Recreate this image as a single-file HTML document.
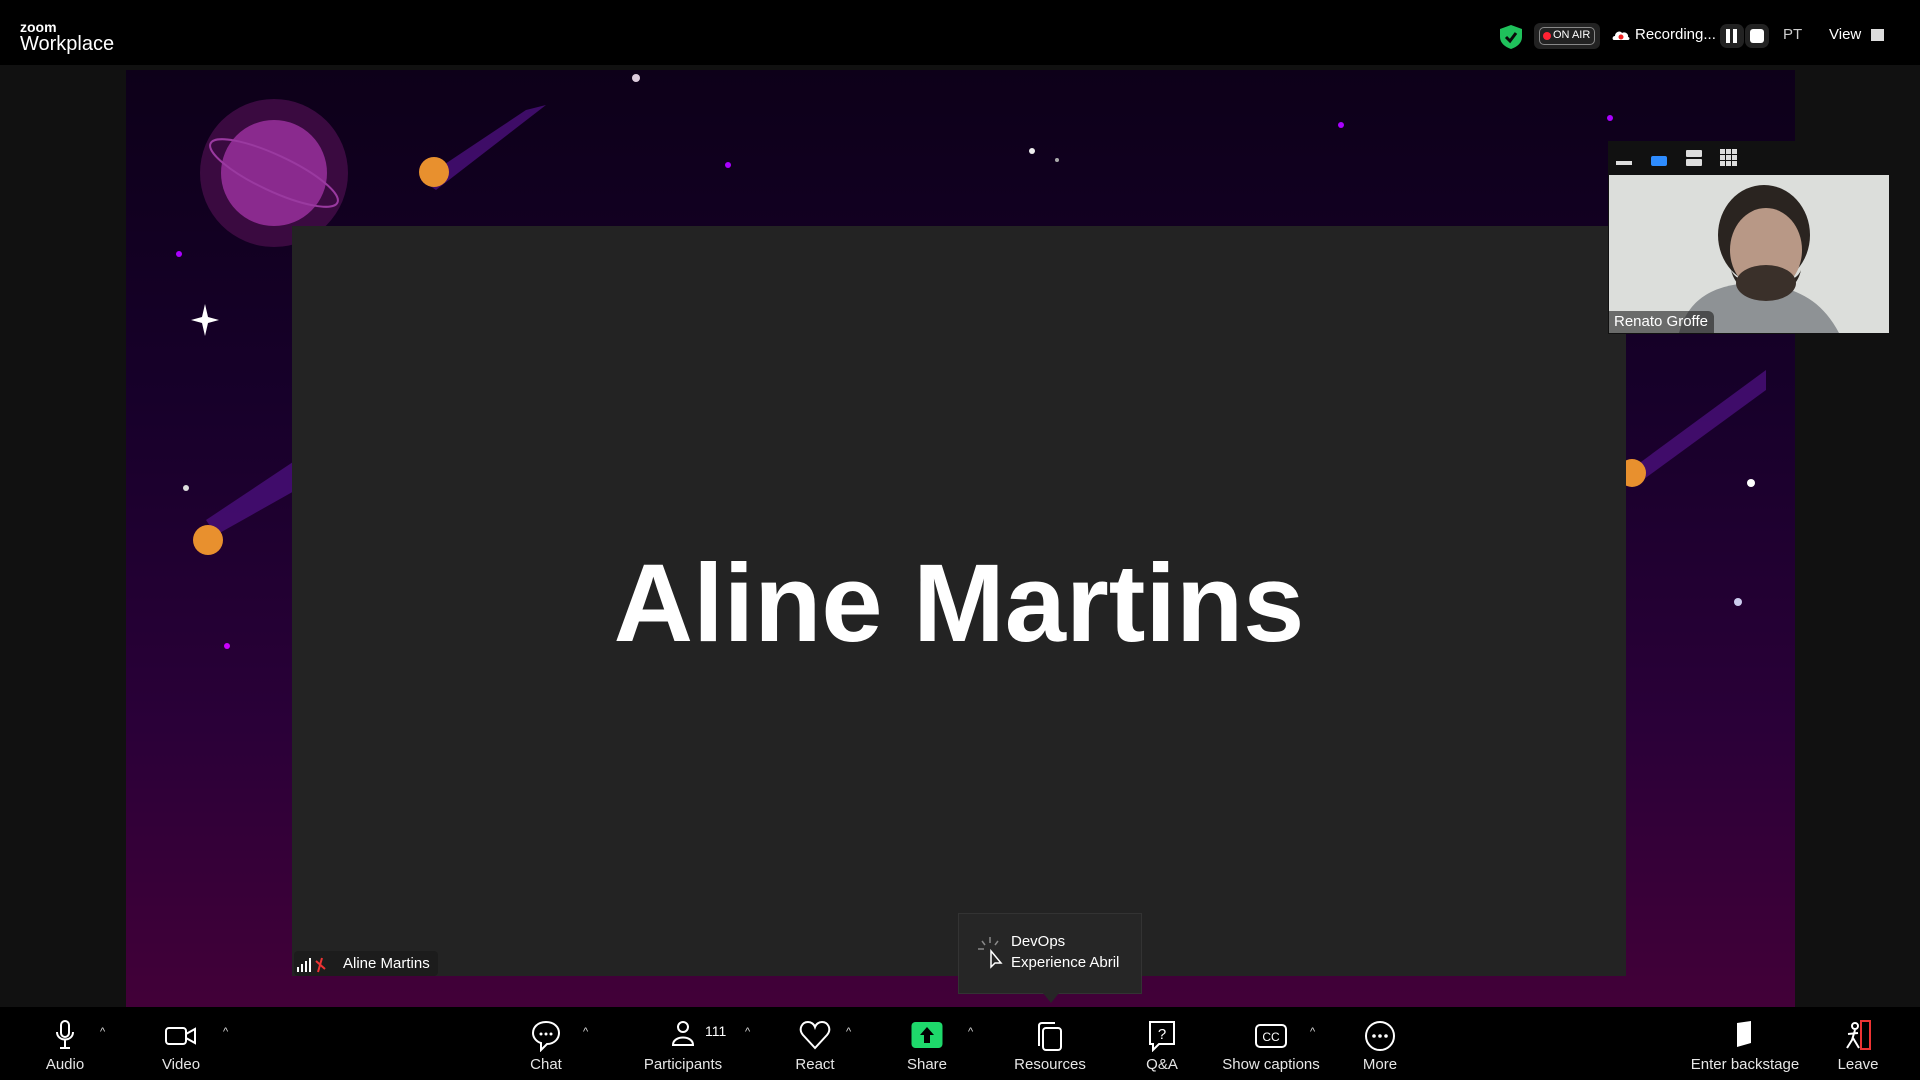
<!DOCTYPE html>
<html><head><meta charset="utf-8"><style>
*{margin:0;padding:0;box-sizing:border-box}
body{width:1920px;height:1080px;background:#111;overflow:hidden;position:relative;font-family:"Liberation Sans",sans-serif;color:#fff}
.abs{position:absolute}
#top{left:0;top:0;width:1920px;height:65px;background:#000}
#stage{left:126px;top:70px;width:1669px;height:937px;background:linear-gradient(180deg,#0d0019 0%,#17002a 35%,#2a0038 70%,#420038 100%)}
#slide{left:292px;top:226px;width:1334px;height:750px;background:#232323}
#name{left:292px;top:540px;width:1334px;text-align:center;font-size:110px;font-weight:bold;letter-spacing:0}
#bar{left:0;top:1007px;width:1920px;height:73px;background:#000}
.it{position:absolute;top:1056px;font-size:15px;color:#e6e6e6;transform:translateX(-50%);white-space:nowrap}
.ic{position:absolute;top:1020px;transform:translateX(-50%)}
.car{position:absolute;top:1026px;font-size:11px;color:#ddd}
</style></head><body>
<div id="top" class="abs"></div>
<div class="abs" style="left:20px;top:19px;font-size:14px;font-weight:bold;letter-spacing:0">zoom</div>
<div class="abs" style="left:20px;top:33px;font-size:20px">Workplace</div>

<svg class="abs" style="left:1498px;top:24px" width="26" height="26" viewBox="0 0 26 26"><path d="M13 1 L24 5 V13 C24 19 19 23 13 25 C7 23 2 19 2 13 V5 Z" fill="#1fc15b"/><path d="M8 13 L12 17 L18 9" stroke="#0a0a0a" stroke-width="3" fill="none"/></svg>
<div class="abs" style="left:1534px;top:23px;width:66px;height:26px;background:#222;border-radius:6px"></div>
<div class="abs" style="left:1539px;top:27px;width:56px;height:18px;border:1.5px solid #888;border-radius:5px;font-size:11px;line-height:15px;padding-left:13px;white-space:nowrap">ON AIR</div>
<div class="abs" style="left:1543px;top:32px;width:8px;height:8px;border-radius:50%;background:#f23"></div>
<svg class="abs" style="left:1612px;top:28px" width="18" height="14"><path d="M2 12 C0 12 0 8 3 8 C3 4 8 2 10 5 C13 3 17 6 16 9 C18 9 18 12 16 12 Z" fill="#fff"/><circle cx="9" cy="9" r="2.5" fill="#e22"/></svg>
<div class="abs" style="left:1635px;top:26px;font-size:15px;white-space:nowrap">Recording...</div>
<div class="abs" style="left:1720px;top:24px;width:24px;height:24px;background:#222;border-radius:7px"></div>
<div class="abs" style="left:1726px;top:29px;width:4px;height:14px;background:#fff"></div>
<div class="abs" style="left:1733px;top:29px;width:4px;height:14px;background:#fff"></div>
<div class="abs" style="left:1745px;top:24px;width:24px;height:24px;background:#222;border-radius:7px"></div>
<div class="abs" style="left:1750px;top:29px;width:14px;height:14px;background:#fff;border-radius:3px"></div>
<div class="abs" style="left:1783px;top:26px;font-size:15px;color:#ccc">PT</div>
<div class="abs" style="left:1829px;top:26px;font-size:15px">View</div>
<div class="abs" style="left:1871px;top:29px;width:13px;height:12px;background:#ddd"></div>

<div id="stage" class="abs"></div>
<svg class="abs" style="left:126px;top:70px" width="1669" height="937">
<circle cx="148" cy="103" r="74" fill="#3a0a40"/>
<circle cx="148" cy="103" r="53" fill="#8a2a8e"/>
<ellipse cx="148" cy="103" rx="70" ry="18" transform="rotate(25 148 103)" fill="none" stroke="#9a3aa0" stroke-width="2"/>
<path d="M295 110 L400 40 L420 35 L310 120 Z" fill="#4a0f7a" opacity=".8"/>
<circle cx="308" cy="102" r="15" fill="#e8902e"/>
<path d="M80 450 L170 390 L170 420 L90 465 Z" fill="#4a0f7a" opacity=".8"/>
<circle cx="82" cy="500" r="15" fill="#e8902e" transform="translate(0,-30)"/>
<path d="M1504 400 L1640 300 L1640 320 L1510 415 Z" fill="#4a0f7a" opacity=".8"/>
<circle cx="1506" cy="403" r="14" fill="#e8902e"/>
<circle cx="1520" cy="135" r="30" fill="#8a2a8e"/>
<path d="M79 234 L82 247 L93 250 L82 253 L79 266 L76 253 L65 250 L76 247Z" fill="#fff"/>
<circle cx="510" cy="8" r="4" fill="#dcd"/><circle cx="906" cy="81" r="3" fill="#eee"/><circle cx="931" cy="90" r="2" fill="#aaa"/>
<circle cx="60" cy="418" r="3" fill="#ddd"/><circle cx="1625" cy="413" r="4" fill="#fff"/><circle cx="1612" cy="532" r="4" fill="#cce"/>
<circle cx="602" cy="95" r="3" fill="#a0f"/><circle cx="1215" cy="55" r="3" fill="#a0f"/><circle cx="53" cy="184" r="3" fill="#a0f"/><circle cx="101" cy="576" r="3" fill="#c0f"/><circle cx="1484" cy="48" r="3" fill="#a0f"/>
</svg>
<div id="slide" class="abs"></div>
<div id="name" class="abs">Aline Martins</div>

<div class="abs" style="left:294px;top:951px;width:144px;height:25px;background:#1c1c1c;border-radius:4px"></div>
<svg class="abs" style="left:296px;top:957px" width="32" height="16"><rect x="1" y="10" width="2" height="5" fill="#fff"/><rect x="5" y="7" width="2" height="8" fill="#fff"/><rect x="9" y="4" width="2" height="11" fill="#fff"/><rect x="13" y="1" width="2" height="14" fill="#fff"/><path d="M26 1 L22 15 M20 4 L29 12" stroke="#e33" stroke-width="2"/></svg>
<div class="abs" style="left:343px;top:955px;font-size:15px">Aline Martins</div>

<div class="abs" style="left:958px;top:913px;width:184px;height:81px;background:#262626;border:1px solid #333"></div>
<div class="abs" style="left:1043px;top:993px;width:0;height:0;border-left:8px solid transparent;border-right:8px solid transparent;border-top:10px solid #262626"></div>
<div class="abs" style="left:1011px;top:931px;font-size:15px;line-height:21px">DevOps<br>Experience Abril</div>
<svg class="abs" style="left:976px;top:935px" width="30" height="36"><g stroke="#888" stroke-width="1.5"><path d="M14 2v6M6 6l3 4M2 14h6M22 6l-3 4"/></g><path d="M15 16 L15 32 L19 28 L25 28 Z" fill="none" stroke="#fff" stroke-width="1.5"/></svg>

<div class="abs" style="left:1608px;top:141px;width:281px;height:193px;background:#111"></div>
<div class="abs" style="left:1616px;top:161px;width:16px;height:4px;background:#ddd"></div>
<div class="abs" style="left:1651px;top:156px;width:16px;height:10px;background:#2e8cff;border-radius:2px"></div>
<div class="abs" style="left:1686px;top:150px;width:16px;height:7px;background:#ddd;border-radius:1px"></div>
<div class="abs" style="left:1686px;top:159px;width:16px;height:7px;background:#ddd;border-radius:1px"></div>
<svg class="abs" style="left:1720px;top:149px" width="18" height="18"><g fill="#ddd"><rect x="0" y="0" width="5" height="5"/><rect x="6" y="0" width="5" height="5"/><rect x="12" y="0" width="5" height="5"/><rect x="0" y="6" width="5" height="5"/><rect x="6" y="6" width="5" height="5"/><rect x="12" y="6" width="5" height="5"/><rect x="0" y="12" width="5" height="5"/><rect x="6" y="12" width="5" height="5"/><rect x="12" y="12" width="5" height="5"/></g></svg>
<svg class="abs" style="left:1609px;top:175px" width="280" height="158"><rect width="280" height="158" fill="#dcdedb"/><path d="M70 158 C80 120 110 110 140 108 C180 110 210 120 230 158Z" fill="#8e9295"/><ellipse cx="155" cy="60" rx="46" ry="50" fill="#2a2420"/><ellipse cx="157" cy="75" rx="36" ry="42" fill="#b89886"/><path d="M122 95 C130 130 185 130 192 95 C185 115 130 115 122 95Z" fill="#2a2420"/><ellipse cx="157" cy="108" rx="30" ry="18" fill="#3a302a"/></svg>
<div class="abs" style="left:1609px;top:311px;width:105px;height:22px;background:rgba(30,30,30,.6);border-radius:0 6px 0 0"></div>
<div class="abs" style="left:1614px;top:313px;font-size:15px">Renato Groffe</div>

<div id="bar" class="abs"></div>
<svg class="ic" style="left:65px" width="20" height="30"><rect x="6" y="1" width="8" height="16" rx="4" fill="none" stroke="#fff" stroke-width="2"/><path d="M2 12 C2 22 18 22 18 12 M10 20V28M5 28H15" fill="none" stroke="#fff" stroke-width="2"/></svg>
<div class="car" style="left:100px">^</div><div class="it" style="left:65px">Audio</div>
<svg class="ic" style="left:181px;top:1026px" width="32" height="20"><rect x="1" y="2" width="20" height="16" rx="3" fill="none" stroke="#fff" stroke-width="2"/><path d="M21 8 L30 3 V17 L21 12" fill="none" stroke="#fff" stroke-width="2"/></svg>
<div class="car" style="left:223px">^</div><div class="it" style="left:181px">Video</div>
<svg class="ic" style="left:546px" width="30" height="32"><path d="M15 2 C6 2 2 8 2 13 C2 18 6 22 10 23 V30 L16 24 C24 24 28 18 28 13 C28 7 23 2 15 2Z" fill="none" stroke="#fff" stroke-width="2"/><circle cx="10" cy="14" r="1.5" fill="#fff"/><circle cx="15" cy="14" r="1.5" fill="#fff"/><circle cx="20" cy="14" r="1.5" fill="#fff"/></svg>
<div class="car" style="left:583px">^</div><div class="it" style="left:546px">Chat</div>
<svg class="ic" style="left:683px" width="26" height="26"><circle cx="13" cy="7" r="5" fill="none" stroke="#fff" stroke-width="2"/><path d="M3 25 C3 15 23 15 23 25Z" fill="none" stroke="#fff" stroke-width="2"/></svg>
<div class="abs" style="left:705px;top:1023px;font-size:14px">111</div>
<div class="car" style="left:745px">^</div><div class="it" style="left:683px">Participants</div>
<svg class="ic" style="left:815px" width="32" height="30"><path d="M16 28 L4 15 C-1 9 3 2 9 2 C12 2 15 4 16 7 C17 4 20 2 23 2 C29 2 33 9 28 15 Z" fill="none" stroke="#fff" stroke-width="2"/></svg>
<div class="car" style="left:846px">^</div><div class="it" style="left:815px">React</div>
<div class="ic" style="left:927px;top:1022px;width:31px;height:26px;background:#1ed96b;border-radius:4px"></div>
<svg class="ic" style="left:927px;top:1026px" width="16" height="18"><path d="M8 1 L15 9 H11 V17 H5 V9 H1Z" fill="#000"/></svg>
<div class="car" style="left:968px">^</div><div class="it" style="left:927px">Share</div>
<svg class="ic" style="left:1050px" width="30" height="32"><rect x="8" y="8" width="18" height="22" rx="3" fill="none" stroke="#fff" stroke-width="2"/><path d="M4 26 V6 C4 4 5 3 7 3 H20" fill="none" stroke="#fff" stroke-width="2"/></svg>
<div class="it" style="left:1050px">Resources</div>
<svg class="ic" style="left:1162px" width="30" height="32"><path d="M3 2 H27 V24 H12 L6 30 V24 H3Z" fill="none" stroke="#fff" stroke-width="2"/><text x="15" y="19" font-size="15" fill="#fff" text-anchor="middle" font-family="Liberation Sans">?</text></svg>
<div class="it" style="left:1162px">Q&amp;A</div>
<svg class="ic" style="left:1271px;top:1024px" width="32" height="24"><rect x="1" y="1" width="30" height="22" rx="4" fill="none" stroke="#fff" stroke-width="2"/><text x="16" y="17" font-size="12" fill="#fff" text-anchor="middle" font-family="Liberation Sans">CC</text></svg>
<div class="car" style="left:1310px">^</div><div class="it" style="left:1271px">Show captions</div>
<svg class="ic" style="left:1380px" width="32" height="32"><circle cx="16" cy="16" r="14" fill="none" stroke="#fff" stroke-width="2"/><circle cx="10" cy="16" r="1.8" fill="#fff"/><circle cx="16" cy="16" r="1.8" fill="#fff"/><circle cx="22" cy="16" r="1.8" fill="#fff"/></svg>
<div class="it" style="left:1380px">More</div>
<svg class="ic" style="left:1745px" width="22" height="30"><path d="M3 3 L17 1 V23 L3 27Z" fill="#fff"/></svg>
<div class="it" style="left:1745px">Enter backstage</div>
<svg class="ic" style="left:1858px" width="30" height="32"><rect x="18" y="1" width="9" height="28" fill="none" stroke="#e33" stroke-width="2"/><circle cx="12" cy="6" r="3" fill="none" stroke="#fff" stroke-width="2"/><path d="M12 10 L9 20 L4 28 M10 18 L16 28 M5 14 L15 13" stroke="#fff" stroke-width="2" fill="none"/></svg>
<div class="it" style="left:1858px">Leave</div>
</body></html>
